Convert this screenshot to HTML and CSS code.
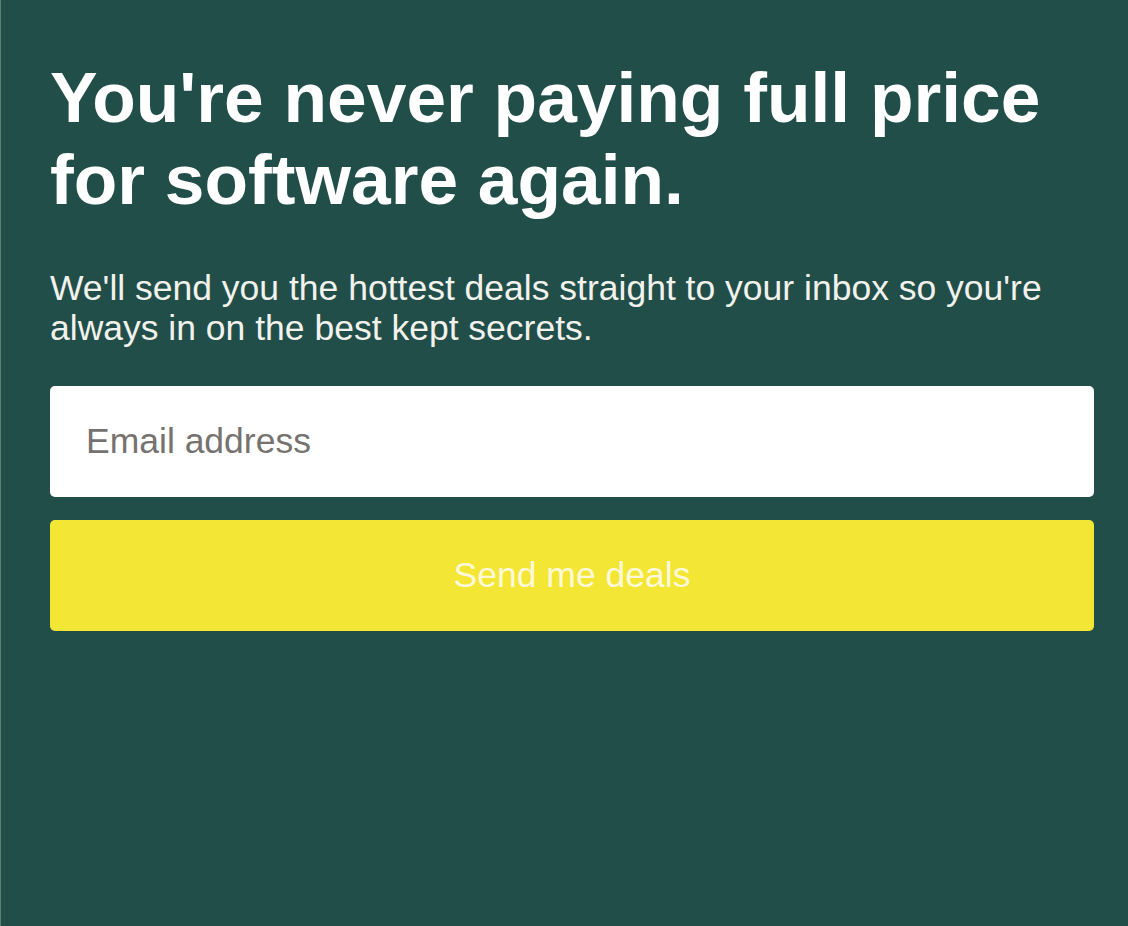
FILE: index.html
```html
<!DOCTYPE html>
<html>
<head>
<meta charset="utf-8">
<link rel="stylesheet" href="styles.css">
</head>
<body>
<div class="panel">
  <h1 class="title">You're never paying full price for software again.</h1>
  <p class="lead">We'll send you the hottest deals straight to your inbox so you're always in on the best kept secrets.</p>
  <form class="signup">
    <input class="email" type="email" placeholder="Email address">
    <button class="submit" type="button">Send me deals</button>
  </form>
</div>
</body>
</html>
```

FILE: styles.css
```css
html, body {
  margin: 0;
  padding: 0;
  height: 100%;
}
body {
  background: #224e4a;
  font-family: "Liberation Sans", Arial, sans-serif;
}
.panel {
  box-sizing: border-box;
  min-height: 100%;
  border-left: 1px solid #5f7f7b;
  padding: 56px 34px 0 49px;
}
.title {
  margin: 0;
  color: #ffffff;
  font-size: 71.3px;
  line-height: 82px;
  font-weight: 700;
}
.lead {
  margin: 48px 0 0;
  color: #f2f2ec;
  font-size: 35.5px;
  line-height: 40px;
}
.signup {
  margin-top: 38px;
  display: flex;
  flex-direction: column;
  gap: 23px;
}
.email {
  box-sizing: border-box;
  height: 111px;
  border: none;
  border-radius: 5px;
  background: #ffffff;
  padding: 0 36px;
  font-family: inherit;
  font-size: 35.5px;
  color: #333;
  outline: none;
}
.email::placeholder {
  color: #75726f;
}
.submit {
  height: 111px;
  border: none;
  border-radius: 5px;
  background: #f3e635;
  color: #fdf9d8;
  font-family: inherit;
  font-size: 35.5px;
  cursor: pointer;
}
```
